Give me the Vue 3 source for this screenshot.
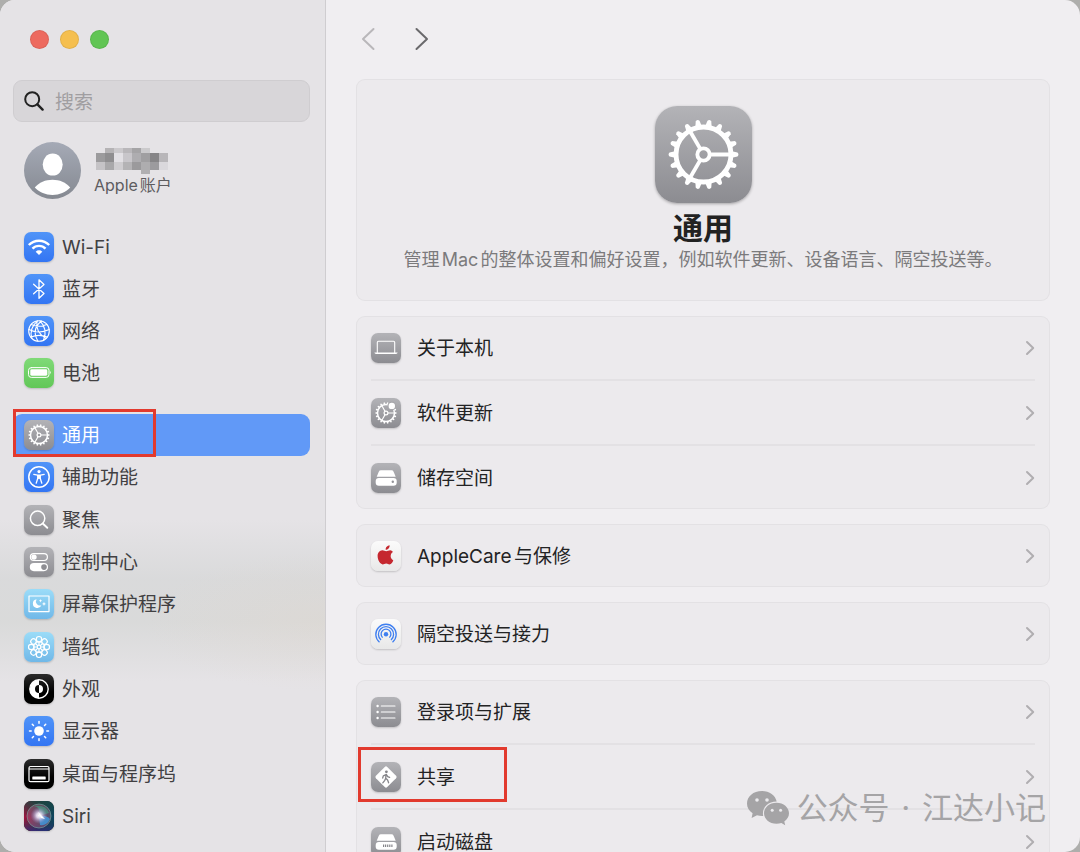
<template>
  <div class="desktop">
    <div class="window">
      <!-- 侧边栏 -->
      <aside class="sidebar">
        <div class="traffic-lights">
          <button class="light close" type="button" aria-label="关闭"></button>
          <button class="light minimize" type="button" aria-label="最小化"></button>
          <button class="light zoom" type="button" aria-label="缩放"></button>
        </div>

        <label class="search">
          <svg class="search-icon" viewBox="0 0 20 20" fill="none" stroke="currentColor" stroke-width="2" stroke-linecap="round">
            <circle cx="8.2" cy="8.2" r="7" />
            <path d="M13.4 13.4L18.6 18.6" stroke-width="2.4" />
          </svg>
          <input v-model="keyword" class="search-input" type="text" placeholder="搜索" aria-label="搜索" />
        </label>

        <a class="account" href="#account">
          <svg class="avatar" viewBox="0 0 57 57">
            <defs>
              <linearGradient id="avatar-bg" x1="0" y1="0" x2="0" y2="1">
                <stop offset="0" stop-color="#a5aab6" />
                <stop offset="1" stop-color="#858991" />
              </linearGradient>
            </defs>
            <circle cx="28.5" cy="28.5" r="28.5" fill="url(#avatar-bg)" />
            <ellipse cx="28.7" cy="22.6" rx="10" ry="11" fill="#fff" />
            <path d="M10.8 45.6C15 40.5 21.5 37.8 28.5 37.8S42 40.5 46.2 45.6C41.5 50.3 35.5 53 28.5 53S15.5 50.3 10.8 45.6Z" fill="#fff" />
          </svg>
          <span class="account-info">
            <svg class="mosaic" viewBox="0 0 74 28">
              <rect v-for="(cell, i) in mosaic" :key="i" :x="cell.x" :y="cell.y" width="9" :height="cell.h" :fill="cell.fill" />
            </svg>
            <span class="account-label">Apple账户</span>
          </span>
        </a>

        <nav class="nav">
          <div v-for="(group, g) in navGroups" :key="g" class="nav-group">
            <a
              v-for="item in group"
              :key="item.name"
              class="nav-item"
              :class="{ active: item.name === current }"
              :href="'#' + item.icon"
              @click.prevent="current = item.name"
            >
              <svg class="icon" :class="item.tone" viewBox="0 0 30 30" v-html="icons[item.icon]" />
              <span class="nav-name">{{ item.name }}</span>
              <span v-if="item.marked" class="mark mark-nav"></span>
            </a>
          </div>
        </nav>
      </aside>

      <!-- 内容区 -->
      <main class="content">
        <div class="toolbar">
          <button class="nav-button back" type="button" aria-label="后退" disabled>
            <svg viewBox="0 0 14 24"><path d="M12.5 2L2 12L12.5 22" /></svg>
          </button>
          <button class="nav-button" type="button" aria-label="前进">
            <svg viewBox="0 0 14 24"><path d="M1.5 2L12 12L1.5 22" /></svg>
          </button>
        </div>

        <section class="card hero">
          <svg class="hero-icon gray" viewBox="0 0 30 30" v-html="icons.gear" />
          <h1 class="hero-title">通用</h1>
          <p class="hero-text">管理Mac的整体设置和偏好设置，例如软件更新、设备语言、隔空投送等。</p>
        </section>

        <section v-for="(card, c) in cards" :key="c" class="card">
          <button v-for="row in card" :key="row.name" class="row" type="button">
            <svg class="icon" :class="row.tone" viewBox="0 0 30 30" v-html="icons[row.icon]" />
            <span class="row-name">{{ row.name }}</span>
            <svg class="chevron" viewBox="0 0 10 16"><path d="M2 2L8.2 8L2 14" /></svg>
            <span v-if="row.marked" class="mark mark-row"></span>
          </button>
        </section>
      </main>

      <!-- 水印 -->
      <div class="watermark">
        <svg class="wechat" viewBox="0 0 44 36">
          <path d="M16 1C7.2 1 1 6.5 1 13.5C1 17.5 3 21 6.6 23.3L5.6 28L11 25.2C13 25.8 15 26 17.2 25.9C15.5 18.5 21.5 11.5 30.7 11.6C29.5 5.5 23.5 1 16 1Z" />
          <path d="M30.5 12.8C23.4 12.8 18 17.5 18 23.3S23.4 33.8 30.5 33.8C32.2 33.8 33.9 33.5 35.4 33L39.2 35.2L38.3 31.5C41.2 29.5 43 26.6 43 23.3C43 17.5 37.6 12.8 30.5 12.8Z" />
          <g class="eyes">
            <circle cx="11" cy="10" r="1.8" />
            <circle cx="21" cy="10" r="1.8" />
            <circle cx="26.2" cy="20.2" r="1.5" />
            <circle cx="34.6" cy="20.2" r="1.5" />
          </g>
        </svg>
        <span>公众号<span class="dot"> · </span>江达小记</span>
      </div>
    </div>
  </div>
</template>

<script setup>
import { ref } from 'vue';

const keyword = ref('');
const current = ref('通用');

const navGroups = [
  [
    { name: 'Wi-Fi', icon: 'wifi', tone: 'blue' },
    { name: '蓝牙', icon: 'bluetooth', tone: 'blue' },
    { name: '网络', icon: 'globe', tone: 'blue' },
    { name: '电池', icon: 'battery', tone: 'green' }
  ],
  [
    { name: '通用', icon: 'gear', tone: 'gray', marked: true },
    { name: '辅助功能', icon: 'accessibility', tone: 'blue' },
    { name: '聚焦', icon: 'spotlight', tone: 'gray' },
    { name: '控制中心', icon: 'control', tone: 'gray' },
    { name: '屏幕保护程序', icon: 'screensaver', tone: 'cyan' },
    { name: '墙纸', icon: 'wallpaper', tone: 'cyan' },
    { name: '外观', icon: 'appearance', tone: 'black' },
    { name: '显示器', icon: 'display', tone: 'blue' },
    { name: '桌面与程序坞', icon: 'dock', tone: 'black' },
    { name: 'Siri', icon: 'siri', tone: 'black' }
  ]
];

const cards = [
  [
    { name: '关于本机', icon: 'laptop', tone: 'gray' },
    { name: '软件更新', icon: 'update', tone: 'gray' },
    { name: '储存空间', icon: 'storage', tone: 'gray' }
  ],
  [{ name: 'AppleCare与保修', icon: 'apple', tone: 'white' }],
  [{ name: '隔空投送与接力', icon: 'airdrop', tone: 'white' }],
  [
    { name: '登录项与扩展', icon: 'list', tone: 'gray' },
    { name: '共享', icon: 'sharing', tone: 'gray', marked: true },
    { name: '启动磁盘', icon: 'disk', tone: 'gray' }
  ]
];

// 旋转复制一段图形
function spin(count, shape) {
  let out = '';
  for (let i = 0; i < count; i++) {
    out += `<g transform="rotate(${(360 / count) * i} 15 15)">${shape}</g>`;
  }
  return out;
}

const gear =
  '<g fill="none" stroke="#fff"><circle cx="15" cy="15" r="8.5" stroke-width="1.5"/><circle cx="15" cy="15" r="1.9" stroke-width="1.2"/></g>' +
  spin(18, '<path d="M23.8 14L25.5 14.4Q26.1 15 25.5 15.6L23.8 16Z" fill="#fff"/>') +
  spin(3, '<path d="M17 15H23.6" stroke="#fff" stroke-width="1.2"/>');

const line = 'fill="none" stroke="#fff" stroke-linecap="round" stroke-linejoin="round"';
const drive = '<path d="M10 7.3H20.4Q22 7.3 22.6 8.7L24.7 13.7H5.7L7.8 8.7Q8.4 7.3 10 7.3Z" fill="#fff"/><rect x="4.7" y="14.9" width="21" height="7.8" rx="3.2" fill="#fff"/>';

const icons = {
  wifi: `<g fill="none" stroke="#fff" stroke-width="2.4"><path d="M4.8 13A14.2 14.2 0 0 1 25.2 13"/><path d="M8.5 16.7A9 9 0 0 1 21.5 16.7"/></g><path d="M15 23L11.7 19.7A4.7 4.7 0 0 1 18.3 19.7Z" fill="#fff"/>`,
  bluetooth: `<path ${line} stroke-width="1.3" d="M9.6 10.2L20 19.6L15 24.2V5.8L20 10.4L9.6 19.8"/>`,
  globe: `<g ${line} stroke-width="1.1"><circle cx="15" cy="15" r="10.3"/><path d="M17.5 5Q7 13.5 14 25.2M13 5Q11 16 22 22.5M16 4.8Q24 13 19.5 24.2M13.5 4.8Q4.5 13 8 22.4M4.8 13.5Q15 18.5 25.2 13.5M7.2 8.5Q15 12 22.8 8.5M6.8 21Q15 17.8 23.2 21"/></g>`,
  battery: `<rect x="4.5" y="9.6" width="20.5" height="9.8" rx="2.8" ${line} stroke-width="1"/><rect x="6.3" y="11.3" width="17" height="6.4" rx="1.4" fill="#fff"/><path d="M26.2 12.8Q27.8 14.5 26.2 16.2Z" fill="#fff"/>`,
  gear,
  accessibility: `<circle cx="15" cy="15" r="10.2" ${line} stroke-width="1.5"/><circle cx="15" cy="9.6" r="1.6" fill="#fff"/><path ${line} stroke-width="1.3" d="M9.8 12.3L13.6 13.2H16.4L20.2 12.3M13.7 13.4V16.5L12.2 21.2M16.3 13.4V16.5L17.8 21.2M15 13.5V16.5"/>`,
  spotlight: `<circle cx="13.6" cy="13.3" r="7.2" ${line} stroke-width="1.5"/><path ${line} stroke-width="1.9" d="M19 18.7L23.3 22.8"/>`,
  control: `<rect x="6.4" y="6.7" width="17" height="6.8" rx="3.4" ${line} stroke-width="1.2"/><circle cx="10" cy="10.1" r="2.7" fill="#fff"/><rect x="5.8" y="16" width="18.2" height="8.2" rx="4.1" fill="#fff"/><circle cx="20" cy="20.1" r="2.8" fill="#8e8e93"/>`,
  screensaver: `<rect x="5" y="7" width="20" height="15.6" ${line} stroke-width="1.2"/><path d="M12.6 10.3A4.4 4.4 0 1 0 17.4 16.2A4 4 0 0 1 12.6 10.3Z" fill="#fff"/><path d="M16.5 10L17 11.2L18.2 11.7L17 12.2L16.5 13.4L16 12.2L14.8 11.7L16 11.2ZM20 12.8L20.6 14.3L22 14.9L20.6 15.5L20 17L19.4 15.5L18 14.9L19.4 14.3Z" fill="#fff"/>`,
  wallpaper: `<g ${line} stroke-width="1.2">${spin(8, '<circle cx="15" cy="7.2" r="2.7"/><path d="M15 10V13"/>')}<circle cx="15" cy="15" r="1.8"/><circle cx="15" cy="15" r="5" stroke-width=".8"/></g>`,
  appearance: `<circle cx="15" cy="15" r="9.2" ${line} stroke-width="1.4"/><path d="M15 5.8A9.2 9.2 0 0 0 15 24.2V19A4 4 0 0 1 15 11Z" fill="#fff"/><path d="M15 11A4 4 0 0 1 15 19Z" fill="#fff"/>`,
  display: `<circle cx="15" cy="15" r="4.8" fill="#fff"/>${spin(8, '<path d="M22.8 15H24.5" stroke="#fff" stroke-width="1.5" stroke-linecap="round"/>')}`,
  dock: `<rect x="5" y="7.5" width="20" height="15.2" rx="1.5" ${line} stroke-width="1.2"/><path d="M5 10H25" stroke="#fff" stroke-width="1"/><rect x="8.3" y="17.5" width="13.4" height="3" rx=".6" fill="#fff"/>`,
  siri: `<defs><linearGradient id="siri-a"><stop offset="0" stop-color="#a3123f"/><stop offset=".5" stop-color="#33323f"/><stop offset="1" stop-color="#0c4560"/></linearGradient><radialGradient id="siri-b"><stop offset="0" stop-color="#fff"/><stop offset=".3" stop-color="#e9dff5" stop-opacity=".9"/><stop offset="1" stop-color="#8b86c8" stop-opacity="0"/></radialGradient><linearGradient id="siri-c" x1="0" y1="0" x2="0" y2="1"><stop offset="0" stop-color="#16493f"/><stop offset=".55" stop-color="#16493f" stop-opacity="0"/><stop offset="1" stop-color="#2b2a86"/></linearGradient></defs><rect width="30" height="30" rx="7" fill="url(#siri-a)"/><rect width="30" height="30" rx="7" fill="url(#siri-c)" opacity=".75"/><circle cx="15" cy="15" r="12" fill="#d0709f" fill-opacity=".35" stroke="#78b3a8" stroke-opacity=".7" stroke-width=".8"/><path d="M15 15Q22 14 26 18Q23 25 16 24Z" fill="#3e9be0" opacity=".8"/><path d="M15 15Q17 6 10 5Q22 3 25 12Z" fill="#3fae86" opacity=".55"/><circle cx="15" cy="14.5" r="8.5" fill="url(#siri-b)"/><path d="M14 11L21 18L17 17Z" fill="#fff"/>`,
  laptop: `<path d="M6.3 19.4V9.4Q6.3 8.2 7.5 8.2H22.5Q23.7 8.2 23.7 9.4V19.4" ${line} stroke-width="1.1"/><path d="M3.4 19.6H26.6Q26.4 21 25 21H5Q3.6 21 3.4 19.6Z" fill="#fff"/>`,
  update: `${gear}<circle cx="20.8" cy="7.9" r="4.4" fill="#a7a7ab"/><circle cx="20.8" cy="7.9" r="3.2" fill="#fff"/>`,
  storage: `${drive}<circle cx="21.8" cy="18.8" r="1.2" fill="#919196"/>`,
  apple: '<path d="M19.3 9.2C17.7 9.2 16.3 10.2 15.2 10.2S12.8 9.3 11.4 9.3C8.7 9.4 6.6 11.7 6.6 15.1C6.6 19.2 9.3 23.4 11.7 23.4C13 23.4 13.6 22.6 15.2 22.6S17.2 23.4 18.5 23.4C20.3 23.4 21.7 21 22.3 19.2C18.9 17.7 18.9 12.7 21.9 11C21.3 9.9 20.2 9.2 19.3 9.2ZM18.6 4.3C16.4 4.5 14.4 6.5 14.7 8.8C16.9 8.8 18.9 6.7 18.6 4.3Z" fill="#c5282f"/>',
  airdrop: '<g fill="none" stroke="#3f7ff0" stroke-width="1.3"><path d="M8.5 23.3A10.2 10.2 0 1 1 21.5 23.3"/><path d="M10 21A7.6 7.6 0 1 1 20 21"/><path d="M11.6 18.6A4.9 4.9 0 1 1 18.4 18.6"/></g><circle cx="15" cy="15.2" r="2.2" fill="#3f7ff0"/>',
  list: `<path d="M10.3 9H24M10.3 15H24M10.3 21H24" ${line} stroke-width="1.1"/><g fill="#fff"><circle cx="6.6" cy="9" r="1.2"/><circle cx="6.6" cy="15" r="1.2"/><circle cx="6.6" cy="21" r="1.2"/></g>`,
  sharing: '<rect x="7" y="7" width="16" height="16" rx="1.8" transform="rotate(45 15 15)" fill="#fff"/><circle cx="15.4" cy="9.8" r="1.4" fill="#85858a"/><path d="M15 12.3L14.7 16.2L16.6 18L17.6 20.8M14.6 16.5L13.6 18.6L11.8 20.8M15 12.6L12.3 13.8L11.7 16M15.6 12.8L16.7 14.6L18.6 15.4" fill="none" stroke="#85858a" stroke-width="1.3" stroke-linecap="round" stroke-linejoin="round"/>',
  disk: `${drive}<path d="M12 18.8H22" stroke="#85858a" stroke-width="2.4" stroke-dasharray="1.1 .8"/>`
};

// 用户名马赛克
const mosaicRows = [
  { y: 0, h: 5, fills: ['', '#b5b3b5', '#cbc9cc', '#b9b7ba', '#a5a4a6', '#cbcacc', '', ''] },
  { y: 5, h: 9, fills: ['#9c9b9d', '#8f8e90', '#e2e0e4', '#c8c6ca', '#aeadb0', '#a09fa1', '#868587', '#b8b6b9'] },
  { y: 14, h: 8, fills: ['#c5c3c6', '#a9a8aa', '#cfcdd0', '#b4b3b5', '#9b9a9c', '#aeadaf', '#9c9b9e', '#dad8dc'] },
  { y: 22, h: 4, fills: ['', '', '', '', '', '#b0afb1', '', ''] }
];
const mosaic = mosaicRows.flatMap((row) =>
  row.fills.map((fill, i) => ({ x: 2 + i * 9, y: row.y + 1, h: row.h, fill: fill || 'none' }))
);
</script>

<style>
body {
  margin: 0;
}
</style>

<style scoped>
.desktop {
  height: 100vh;
  overflow: hidden;
  background: #aeaeac;
  font-family: Inter, "Noto Sans CJK SC", sans-serif;
  font-size: 19px;
  line-height: 28px;
  text-autospace: normal;
}

.window {
  position: relative;
  display: flex;
  height: 100%;
  overflow: hidden;
  border-radius: 15px;
  background: #f0eef1;
}

button {
  padding: 0;
  border: 0;
  background: none;
  font: inherit;
  text-align: left;
}

a {
  color: inherit;
  text-decoration: none;
}

.sidebar {
  flex: 0 0 326px;
  min-width: 0;
  display: flex;
  flex-direction: column;
  box-sizing: border-box;
  padding: 30px 15px 15px 13px;
  border-right: 1px solid #cfcdd0;
  background:
    radial-gradient(ellipse 180px 70px at 100% 73%, rgba(224, 214, 204, 0.35), rgba(224, 214, 204, 0)),
    linear-gradient(to bottom, rgba(206, 209, 208, 0) 61%, rgba(206, 209, 208, 0.5) 68%, rgba(206, 209, 206, 0.5) 73%, rgba(206, 209, 206, 0) 80%),
    #e5e3e6;
}

.traffic-lights {
  display: flex;
  gap: 11px;
  padding-left: 17px;
}

.light {
  width: 19px;
  height: 19px;
  border-radius: 50%;
  box-shadow: inset 0 0 0 1px rgba(0, 0, 0, 0.08);
}

.close {
  background: #ed6a5f;
}

.minimize {
  background: #f5bf4f;
}

.zoom {
  background: #61c554;
}

.search {
  display: flex;
  align-items: center;
  gap: 11px;
  box-sizing: border-box;
  height: 42px;
  margin-top: 31px;
  padding: 0 10px;
  border: 1px solid #cfcdd0;
  border-radius: 9px;
  background: #d8d6d9;
}

.search-icon {
  flex: none;
  width: 20px;
  height: 20px;
  color: #222;
}

.search-input {
  flex: 1;
  width: 100%;
  min-width: 0;
  padding: 3px 0 0;
  border: 0;
  outline: 0;
  background: none;
  font: inherit;
  color: #222;
}

.search-input::placeholder {
  color: #a09ea1;
  opacity: 1;
}

.account {
  display: flex;
  align-items: center;
  gap: 13px;
  margin-top: 20px;
  padding-left: 11px;
}

.avatar {
  width: 57px;
  height: 57px;
}

.account-info {
  display: flex;
  flex-direction: column;
}

.mosaic {
  width: 74px;
  height: 28px;
}

.account-label {
  font-size: 16px;
  line-height: 20px;
  color: #5d5c5f;
}

.nav {
  flex: 1;
  display: flex;
  flex-direction: column;
  gap: 20px;
  margin-top: 27px;
}

.nav-group:last-child {
  flex: 1;
  display: flex;
  flex-direction: column;
  justify-content: space-between;
}

.nav-item {
  position: relative;
  display: flex;
  align-items: center;
  gap: 8px;
  height: 42px;
  padding-left: 11px;
  border-radius: 9px;
  color: #414042;
}

.nav-item.active {
  background: #6199f7;
  color: #fff;
}

.nav-name {
  padding-top: 2px;
}

.icon {
  flex: none;
  width: 30px;
  height: 30px;
  border-radius: 7px;
  box-shadow: 0 1px 2px rgba(0, 0, 0, 0.18);
}

.blue {
  background: linear-gradient(#5094f8, #3375f3);
}

.green {
  background: linear-gradient(#80da78, #62c758);
}

.gray {
  background: linear-gradient(#b3b3b7, #8c8c91);
}

.cyan {
  background: linear-gradient(#9bdcf8, #70b8e8);
}

.black {
  background: linear-gradient(#2c2c2c, #000 60%);
}

.white {
  background: linear-gradient(#fbfbfb, #e8e8e8);
}

.mark {
  position: absolute;
  box-sizing: border-box;
  border: 3px solid #e23a2e;
  pointer-events: none;
}

.mark-nav {
  left: 0;
  top: -5px;
  bottom: -1px;
  width: 143px;
}

.mark-row {
  left: 2px;
  top: 2px;
  bottom: 6px;
  width: 149px;
}

.content {
  flex: 1;
  min-width: 0;
  display: flex;
  flex-direction: column;
  gap: 15px;
  padding: 0 30px;
}

.toolbar {
  flex: none;
  display: flex;
  align-items: center;
  gap: 40px;
  height: 50px;
  padding: 14px 0 0 5px;
}

.nav-button {
  width: 14px;
  height: 24px;
  color: #6a696c;
}

.nav-button.back {
  color: #b9b7ba;
}

.nav-button svg {
  display: block;
  fill: none;
  stroke: currentColor;
  stroke-width: 2;
  stroke-linecap: round;
  stroke-linejoin: round;
}

.card {
  flex: none;
  border-radius: 9px;
  background: #eceaed;
  box-shadow: inset 0 0 0 1px #e3e1e4;
}

.hero {
  display: flex;
  flex-direction: column;
  align-items: center;
  box-sizing: border-box;
  min-height: 222px;
  padding: 27px 16px;
}

.hero-icon {
  width: 97px;
  height: 97px;
  border-radius: 22px;
  box-shadow: 0 1px 3px rgba(0, 0, 0, 0.3);
}

.hero-title {
  margin: 7px 0 0;
  font-size: 30px;
  line-height: 36px;
  font-weight: 700;
  color: #222;
}

.hero-text {
  margin: 0;
  font-size: 18px;
  line-height: 28px;
  text-align: center;
  color: #7b7a7c;
}

.row {
  position: relative;
  display: flex;
  align-items: center;
  gap: 16px;
  width: 100%;
  height: 63px;
  padding: 0 15px;
  color: #232324;
}

.row + .row {
  margin-top: 2px;
}

.row + .row::before {
  content: "";
  position: absolute;
  left: 15px;
  right: 15px;
  top: -2px;
  height: 2px;
  background: #e3e1e4;
}

.row-name {
  flex: 1;
  padding-top: 2px;
}

.chevron {
  width: 10px;
  height: 16px;
  fill: none;
  stroke: #b0aeb1;
  stroke-width: 2;
  stroke-linecap: round;
  stroke-linejoin: round;
}

.watermark {
  position: absolute;
  right: 34px;
  bottom: 22px;
  display: flex;
  align-items: center;
  gap: 7px;
  font-size: 31px;
  line-height: 44px;
  color: #a5a4a6;
}

.dot {
  padding: 0 3px;
}

.wechat {
  width: 44px;
  height: 36px;
  fill: #a5a4a6;
}

.eyes {
  fill: #ecebee;
}
</style>
